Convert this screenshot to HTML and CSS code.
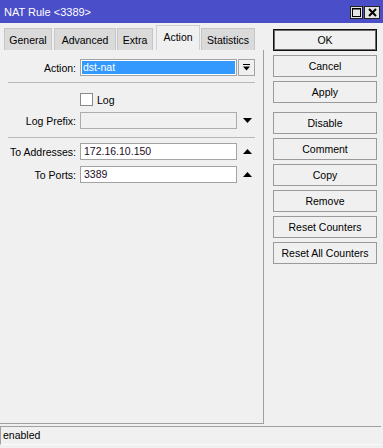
FILE: index.html
```html
<!DOCTYPE html>
<html lang="en">
<head>
    <meta charset="UTF-8">
    <title>NAT Rule &lt;3389&gt;</title>
    <link rel="stylesheet" href="styles.css">
</head>
<body>
    <div class="window">
        <div class="titlebar">
            <span class="title">NAT Rule &lt;3389&gt;</span>
            <div class="wbtns">
                <div class="wbtn">
                    <svg width="11" height="11" viewBox="0 0 11 11"><rect x="1.5" y="1.5" width="8" height="8" fill="none" stroke="#000" stroke-width="1"/><line x1="1" y1="2" x2="10" y2="2" stroke="#000" stroke-width="1"/></svg>
                </div>
                <div class="wbtn close">
                    <svg width="11" height="11" viewBox="0 0 11 11"><path d="M2 2 L9 9 M9 2 L2 9" stroke="#000" stroke-width="2"/></svg>
                </div>
            </div>
        </div>

        <div class="content">
            <div class="left">
                <div class="tabs">
                    <div class="tab t-general">General</div>
                    <div class="tab t-advanced">Advanced</div>
                    <div class="tab t-extra">Extra</div>
                    <div class="tab active t-action">Action</div>
                    <div class="tab t-stats">Statistics</div>
                </div>
                <div class="panel">
                    <div class="row">
                        <div class="lbl">Action:</div>
                        <div class="field selected">dst-nat</div>
                        <div class="dropbtn">
                            <svg width="9" height="9" viewBox="0 0 9 9"><rect x="1" y="1" width="7" height="1" fill="#000"/><path d="M1 3.5 H8 L4.5 7.5 Z" fill="#000"/></svg>
                        </div>
                    </div>
                    <div class="sep"></div>
                    <div class="row check-row">
                        <div class="lbl"></div>
                        <div class="checkbox"></div>
                        <span class="check-lbl">Log</span>
                    </div>
                    <div class="row prefix-row">
                        <div class="lbl">Log Prefix:</div>
                        <div class="field disabled"></div>
                        <div class="arrow">
                            <svg width="9" height="5" viewBox="0 0 9 5"><path d="M0 0 H9 L4.5 5 Z" fill="#000"/></svg>
                        </div>
                    </div>
                    <div class="sep sep2"></div>
                    <div class="row addr-row">
                        <div class="lbl">To Addresses:</div>
                        <div class="field">172.16.10.150</div>
                        <div class="arrow">
                            <svg width="9" height="5" viewBox="0 0 9 5"><path d="M0 5 H9 L4.5 0 Z" fill="#000"/></svg>
                        </div>
                    </div>
                    <div class="row ports-row">
                        <div class="lbl">To Ports:</div>
                        <div class="field">3389</div>
                        <div class="arrow">
                            <svg width="9" height="5" viewBox="0 0 9 5"><path d="M0 5 H9 L4.5 0 Z" fill="#000"/></svg>
                        </div>
                    </div>
                </div>
            </div>

            <div class="actions">
                <button class="btn default">OK</button>
                <button class="btn">Cancel</button>
                <button class="btn">Apply</button>
                <button class="btn group">Disable</button>
                <button class="btn">Comment</button>
                <button class="btn">Copy</button>
                <button class="btn">Remove</button>
                <button class="btn">Reset Counters</button>
                <button class="btn">Reset All Counters</button>
            </div>
        </div>

        <div class="status">enabled</div>
    </div>
</body>
</html>
```

FILE: styles.css
```css
body {
    margin: 0;
    background: #f0f0f0;
    font-family: "Liberation Sans", Arial, sans-serif;
    font-size: 10.5px;
    color: #000;
}
.window {
    width: 383px;
    height: 448px;
    display: flex;
    flex-direction: column;
    background: #f0f0f0;
}
.titlebar {
    height: 23px;
    background: #4b4ec9;
    display: flex;
    align-items: center;
    justify-content: space-between;
    box-sizing: border-box;
}
.title {
    color: #fff;
    font-size: 11px;
    padding-left: 4px;
    padding-top: 1px;
}
.wbtns {
    display: flex;
    gap: 1px;
    padding-right: 3px;
    padding-top: 2px;
}
.wbtn {
    width: 13px;
    height: 13px;
    box-sizing: border-box;
    border: 1px solid #222;
    background: #e4e4e4;
    display: flex;
    align-items: center;
    justify-content: center;
}
.wbtn.close {
    width: 16px;
}
.content {
    display: flex;
    height: 401px;
}
.left {
    width: 264px;
    display: flex;
    flex-direction: column;
}
.tabs {
    height: 27px;
    display: flex;
    align-items: flex-end;
    gap: 2px;
    padding-left: 4px;
    box-sizing: border-box;
}
.tab {
    height: 22px;
    box-sizing: border-box;
    background: #dadada;
    border: 1px solid #c6c6c6;
    border-bottom: none;
    display: flex;
    align-items: center;
    justify-content: center;
    padding-top: 1px;
}
.tab.active {
    height: 25px;
    background: #f0f0f0;
    border-color: #d0d0d0;
    padding-bottom: 3px;
}
.t-general { width: 48px; }
.t-advanced { width: 62px; }
.t-extra { width: 36px; margin-left: -1px; }
.t-action { width: 44px; margin-left: 1px; }
.t-stats { width: 54px; margin-left: -1px; }
.panel {
    flex: 1;
    border-right: 1px solid #a0a0a0;
    border-bottom: 1px solid #a0a0a0;
    padding-top: 9px;
    display: flex;
    flex-direction: column;
}
.row {
    display: flex;
    align-items: center;
    height: 17px;
}
.lbl {
    width: 76px;
    padding-right: 4px;
    text-align: right;
    flex-shrink: 0;
}
.field {
    width: 157px;
    height: 17px;
    box-sizing: border-box;
    border: 1px solid #a3a3a3;
    background: #fff;
    padding-left: 3px;
    line-height: 15px;
    color: #1c0c24;
}
.field.selected {
    background: #3399ff;
    color: #fff;
    box-shadow: inset 0 0 0 1px #fff;
    padding-left: 2px;
}
.field.disabled {
    background: #f0f0f0;
    border-color: #adadad;
}
.dropbtn {
    width: 17px;
    height: 17px;
    box-sizing: border-box;
    margin-left: 1px;
    border: 1px solid #a3a3a3;
    background: #f0f0f0;
    display: flex;
    align-items: center;
    justify-content: center;
}
.arrow {
    width: 18px;
    display: flex;
    justify-content: center;
    padding-left: 1px;
}
.sep {
    width: 247px;
    margin-left: 8px;
    margin-top: 6px;
    border-top: 1px solid #b8b8b8;
}
.check-row {
    height: 13px;
    margin-top: 10px;
}
.checkbox {
    width: 13px;
    height: 13px;
    box-sizing: border-box;
    border: 1px solid #8a8a8a;
    background: #fff;
}
.check-lbl {
    margin-left: 4px;
}
.prefix-row {
    margin-top: 6px;
}
.sep2 {
    margin-top: 8px;
}
.addr-row {
    margin-top: 5px;
}
.ports-row {
    margin-top: 6px;
}
.actions {
    display: flex;
    flex-direction: column;
    gap: 4px;
    padding-top: 6px;
    margin-left: 9px;
}
.btn {
    width: 104px;
    height: 22px;
    box-sizing: border-box;
    border: 1px solid #9a9a9a;
    background: #f0f0f0;
    font-family: inherit;
    font-size: 10.5px;
    color: #000;
    padding: 0;
}
.btn.default {
    border: 1px solid #111;
    box-shadow: inset 0 0 0 1px #6a6a6a;
}
.btn.group {
    margin-top: 5px;
}
.status {
    margin-top: 2px;
    width: 381px;
    height: 19px;
    box-sizing: border-box;
    border-top: 1px solid #a0a0a0;
    border-left: 1px solid #a0a0a0;
    border-bottom: 1px solid #fbfbfb;
    padding-left: 2px;
    line-height: 17px;
}
```
